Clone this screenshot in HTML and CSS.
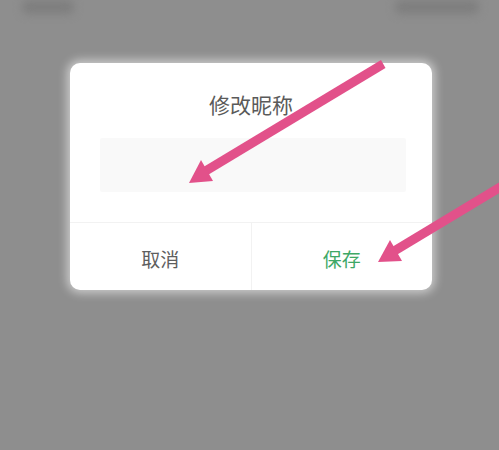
FILE: index.html
```html
<!DOCTYPE html>
<html lang="zh">
<head>
<meta charset="utf-8">
<link rel="stylesheet" href="styles.css">
</head>
<body>
<div class="screen">
  <div class="topbar">
    <span class="blob blob-left"></span>
    <span class="blob blob-right"></span>
  </div>
  <div class="dialog">
    <div class="title">修改昵称</div>
    <div class="field"></div>
    <div class="actions">
      <div class="btn cancel">取消</div>
      <div class="btn save">保存</div>
    </div>
  </div>
  <svg class="annot" width="499" height="450" viewBox="0 0 499 450">
    <g fill="#e2518a" stroke="none">
      <path d="M381 60 L385.5 68 L207 175.5 L202.5 167.5 Z"/>
      <path d="M189 183 L201 160 L213 181 Z"/>
      <path d="M500 182 L504.5 190 L394 256.5 L389.5 248.5 Z"/>
      <path d="M378 262 L390 240 L402 261 Z"/>
    </g>
  </svg>
</div>
</body>
</html>
```

FILE: styles.css
```css
html, body {
  margin: 0;
  padding: 0;
}
body {
  background: #8e8e8e;
  font-family: "Noto Sans CJK SC", "Noto Sans", sans-serif;
  overflow: hidden;
}
.screen {
  position: relative;
  width: 499px;
  height: 450px;
  background: #8e8e8e;
  overflow: hidden;
}
.topbar {
  display: flex;
  justify-content: space-between;
  height: 14px;
  padding: 0 20px 0 22px;
}
.blob {
  display: block;
  height: 14px;
  background: #7e7e7e;
  filter: blur(4px);
  border-radius: 6px;
}
.blob-left {
  width: 52px;
}
.blob-right {
  width: 84px;
}
.dialog {
  margin: 49px 0 0 70px;
  width: 362px;
  height: 227px;
  background: #ffffff;
  border-radius: 10px;
  box-shadow: 0 0 10px 3px rgba(255, 255, 255, 0.55);
  display: flex;
  flex-direction: column;
  overflow: hidden;
}
.title {
  text-align: center;
  font-size: 21px;
  color: #5a5a5a;
  line-height: 28px;
  margin-top: 27px;
}
.field {
  margin: 20px 26px 0 30px;
  height: 54px;
  background: #f9f9f9;
  border-radius: 2px;
}
.actions {
  margin-top: 30px;
  flex: 1;
  display: flex;
  border-top: 1px solid #f2f2f2;
}
.btn {
  flex: 1;
  display: flex;
  align-items: center;
  justify-content: center;
  font-size: 19px;
  padding-top: 3px;
}
.cancel {
  color: #5e5e5e;
  border-right: 1px solid #f2f2f2;
}
.save {
  color: #3ea866;
}
.annot {
  position: absolute;
  left: 0;
  top: 0;
}
```
